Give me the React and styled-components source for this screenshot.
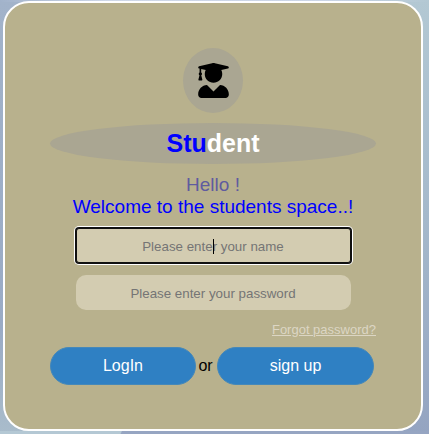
import React from "react";
import styled, { createGlobalStyle } from "styled-components";
import { FaUserGraduate } from "react-icons/fa";

const GlobalStyle = createGlobalStyle`
  *, *::before, *::after { box-sizing: border-box; }
  body { margin: 0; font-family: "Liberation Sans", Arial, sans-serif; }
`;

const Page = styled.main`
  height: 434px;
  padding: 1px 6px 0 3px;
  overflow: hidden;
  background:
    linear-gradient(115deg, #b4c8d4 0 110px, #96a5c2 111px) 0 431px / 100% 3px no-repeat,
    linear-gradient(90deg, #a2b3cb, #cfd8e8 25%, #cbd5e6 75%, #b3c8d3) 0 0 / 100% 2px no-repeat,
    linear-gradient(#a2b3ca, #9aabc5 75%, #a9bccb) 0 0 / 30px 100% no-repeat,
    linear-gradient(#b3c8d3, #a5b9cb 50%, #94a4c1);
`;

const Card = styled.form`
  height: 430px;
  padding: 44.5px 45px 0;
  border: 2px solid #fff;
  border-radius: 26px;
  background: #b8b18d;
  display: flex;
  flex-direction: column;
  align-items: center;
`;

const Avatar = styled.div`
  width: 60px;
  height: 65px;
  padding: 1px 0 0 1px;
  border-radius: 50%;
  background: #aaa692;
  display: flex;
  align-items: center;
  justify-content: center;
  font-size: 35px;
  color: #000;
`;

const Title = styled.h1`
  width: 326px;
  height: 41px;
  margin: 10px 0 0;
  border-radius: 50%;
  background: #aaa692;
  color: #fff;
  font-size: 25px;
  line-height: 40px;
  text-align: center;
`;

const Accent = styled.span`
  color: #0000ff;
`;

const Greeting = styled.p`
  margin: 10px 0 0;
  font-size: 19px;
  line-height: 22px;
  text-align: center;
  white-space: nowrap;
  color: #0000ff;
`;

const Hello = styled.span`
  display: block;
  color: #5f5b9f;
`;

const Field = styled.div`
  position: relative;
  width: 275px;
  height: 35px;
  flex: none;
  margin-top: ${(p) => (p.$focused ? "10.5px" : "12px")};
  border-radius: ${(p) => (p.$focused ? "3px" : "10px")};
  background: #d3ccb1;
  box-shadow: ${(p) => (p.$focused ? "0 0 0 1px #101010, 0 0 0 2px #fff" : "none")};
  border: ${(p) => (p.$focused ? "1px solid #101010" : "0")};
`;

const Input = styled.input`
  display: block;
  width: 100%;
  height: 100%;
  padding: 2px 0 0;
  border: 0;
  outline: 0;
  background: none;
  text-align: center;
  font: 13.333px "Liberation Sans", Arial, sans-serif;
  &::placeholder { color: #757575; opacity: 1; }
`;

const Caret = styled.span`
  position: absolute;
  left: 50%;
  top: 10px;
  width: 1px;
  height: 15px;
  background: #000;
`;

const Forgot = styled.a`
  align-self: flex-end;
  margin: 12px 0 0;
  font-size: 13px;
  line-height: 15px;
  color: #dcd6c4;
  text-decoration: underline;
`;

const Actions = styled.div`
  width: 326px;
  margin: 9.5px 0 0;
  display: flex;
  align-items: center;
  gap: 3px;
  font-size: 16px;
`;

const Or = styled.span`
  width: 15px;
  margin: 0 1px 0 -1px;
  text-align: center;
  white-space: nowrap;
`;

const Button = styled.button`
  width: ${(p) => p.$width};
  height: 38px;
  padding: 0;
  border: 1px solid #4588b9;
  border-radius: 20px;
  background: #2f80c3;
  color: #fff;
  font: 16px "Liberation Sans", Arial, sans-serif;
`;

export default function App() {
  return (
    <>
      <GlobalStyle />
      <Page>
        <Card onSubmit={(e) => e.preventDefault()}>
          <Avatar><FaUserGraduate /></Avatar>
          <Title><Accent>Stu</Accent>dent</Title>
          <Greeting>
            <Hello>Hello !</Hello>
            Welcome to the students space..!
          </Greeting>
          <Field $focused>
            <Input type="text" placeholder="Please enter your name" />
            <Caret />
          </Field>
          <Field>
            <Input type="password" placeholder="Please enter your password" />
          </Field>
          <Forgot href="#">Forgot password?</Forgot>
          <Actions>
            <Button type="submit" $width="146px">LogIn</Button>
            <Or>or</Or>
            <Button type="button" $width="157px">sign up</Button>
          </Actions>
        </Card>
      </Page>
    </>
  );
}
